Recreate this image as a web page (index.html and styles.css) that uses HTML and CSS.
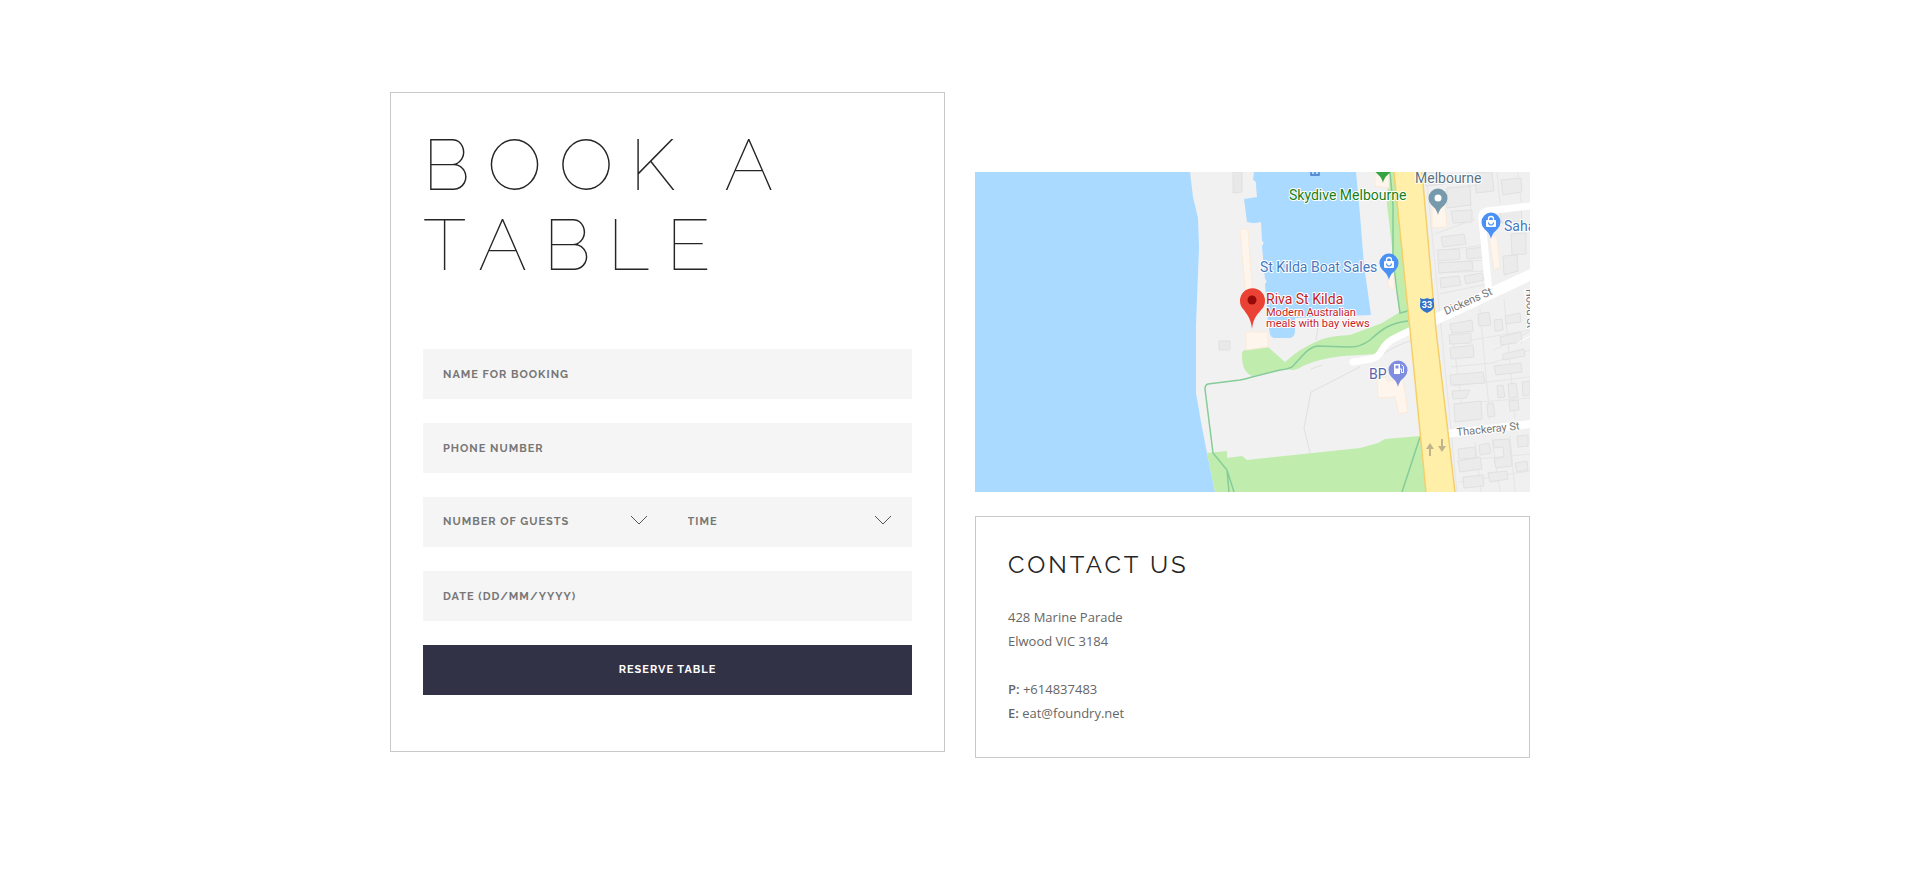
FILE: index.html
```html
<!DOCTYPE html>
<html lang="en">
<head>
<meta charset="utf-8">
<meta name="viewport" content="width=device-width, initial-scale=1">
<title>Book a Table</title>
<link rel="stylesheet" href="styles.css">
</head>
<body>
<main class="container">
  <section class="card booking">
    <h1 class="title">Book a Table</h1>
    <form class="form">
      <input class="field" type="text" placeholder="Name for booking" aria-label="Name for booking">
      <input class="field" type="tel" placeholder="Phone number" aria-label="Phone number">
      <div class="field-row">
        <div class="select">
          <select class="field" aria-label="Number of guests"><option>Number of guests</option></select>
          <svg class="chevron" viewBox="0 0 18 10" aria-hidden="true"><path d="M1 1l8 8 8-8"/></svg>
        </div>
        <div class="select">
          <select class="field" aria-label="Time"><option>Time</option></select>
          <svg class="chevron" viewBox="0 0 18 10" aria-hidden="true"><path d="M1 1l8 8 8-8"/></svg>
        </div>
      </div>
      <input class="field" type="text" placeholder="Date (DD/MM/YYYY)" aria-label="Date (DD/MM/YYYY)">
      <button class="button" type="button">Reserve Table</button>
    </form>
  </section>

  <div class="side">
    <svg class="map" viewBox="0 0 555 320" preserveAspectRatio="xMidYMid slice" role="img" aria-label="Map">
      <defs>
        <path id="pin" d="M0 17C-1 13-2 11-6.500 7A9.500 9.500 0 1 1 6.500 7C2 11 1 13 0 17z"/>
        <g id="bag"><rect x="-5" y="-2" width="10" height="7" rx="1" fill="#fff"/><path d="M-2.500-2v-1a2.500 2.500 0 0 1 5 0v1" fill="none" stroke="#fff" stroke-width="1.300"/><path d="M-2.500 0.500a2.500 2.500 0 0 0 5 0" fill="none" stroke="#4a90f5" stroke-width="1.200"/></g>
      </defs>
      <rect width="555" height="320" fill="#f2f1f2"/>
      <path class="water" d="M0 0H215L218 25L223 46L224 76L221 153V221L226 250L232 281L240 320H0z"/>
      <path class="water" d="M279 0L278 8Q282 9 281 14L282 25L269 27L272 50Q279 52 286 50L287 69Q290 70 287 74L290 107Q293 109 290 112L293 150L295 162Q296 166 300 166H314Q319 166 320 160V146L396 143L389 93L385 43L381 0z"/>
      <path d="M258 0h9v20l-9 1z" fill="#e8e8e9" stroke="#e0e0e1"/>
      <path d="M244 169h11v9h-11z" fill="#e9e9ea" stroke="#e0e0e1"/>
      <path class="green" d="M413 0L412 33L418 83L425 140L407 151L375 163Q354 164 345 168Q325 176 310 190L293 175L270 178Q266 179 267 184Q267 200 277 204L313 197Q319 200 328 194Q350 184 385 183L400 182L412 167L438 154L420 0z"/>
      <path class="green" d="M232 281L252 279V286L267 284L272 288L385 276L403 271L410 267L445 264L451 320H240z"/>
      <path class="lot" d="M385 195L336 220L329 256L335 281M402 186Q420 173 438 168M344 149L341 168M347 193L336 197"/>
      <g class="shop">
        <path d="M265 57h8l5 70h-7z"/><path d="M271 160h22v15l-22 3z"/>
        <path d="M400 0h14v16l-14-2z"/><path d="M412 94l7-1v25l-6-4z"/>
        <path d="M402 206l9-1 1 4 16-2 5 33-9 2-4-17-17 1z"/>
      </g>
      <g class="path">
        <path d="M415 0L418 33V86L422 120L425 141Q430 140 435 138"/>
        <path d="M433 149Q422 150 412 155Q406 158 395 168Q386 175 375 175L342 174Q334 176 328 183L318 194Q315 197 305 198L277 205Q271 207 265 208L233 212Q230 213 230 217L238 281L252 298L259 320M252 298L254 320M445 265L427 320"/>
      </g>
      <path d="M447 0H555V320H480z" fill="#f0f0f1"/>
      <g class="plots">
        <path d="M451 0L482 320M493 0L496 43M522 0L525 32M543 0L546 30M470 20L506 12M500 47L460 62M461 79L509 73M462 91L510 88M463 101L510 99M464 122L513 112M476 152L489 250M505 137L515 248M529 127L540 246M474 172L555 158M476 195L517 191L555 178M519 178L555 159M478 214L555 205M480 232L555 226M482 289L555 282M484 310L555 299M500 270L506 320M517 267L525 320M535 264L540 320"/>
        <path class="house" d="M449 0l18 1 2 11-18 2zM472 16l23-2 1 19-24 3zM476 39l21-1v12l-19 1zM466 65l23-3 2 10-23 3zM463 78l21-1 1 10-22 2zM491 77l18-2 1 10-18 2zM463 91l34-2 1 9-34 3zM465 106l19-2 2 9-20 3zM489 104l18-3 2 7-18 4zM500 1l17-1 2 19-18 2zM526 8l20-2 1 14-19 3zM524 38l22-2 1 13-20 2zM536 62l15-1v21l-14 1zM528 84l14-1 1 16-14 4z"/>
        <path class="house" d="M475 152l22-4 1 11-21 2zM474 163l22-2v10l-21 1zM475 176l23-3 1 12-23 2zM475 203l33-3 2 11-34 2zM477 219l18-1-4 8-13 1zM479 232l27-3 1 18-27 3zM503 142l11-2 2 13-12 1zM519 148l8-1 1 11-8 1zM530 144l15-3 1 9-15 2zM525 165l21-5 1 10-21 3zM528 182l21-5 1 7-22 4zM519 194l27-3 1 9-26 3zM522 214l6-1 2 12-7 1zM533 212l8-1 2 14-9 1zM547 210l8-1v14l-7 1zM512 232l6-1 2 13-7 1zM534 229l9-1 1 10-9 1zM483 277l17-2 1 11-17 1zM483 289l22-4 2 12-22 3zM504 273l10-2 2 10-11 2zM518 268l16-1 3 27-16 2-2-9 10-2-1-10-9 1zM542 264l11-1v11l-10 1zM488 305l20-2 1 11-20 2zM513 301l19-2 1 8-18 3zM540 291l12-2 1 9-11 2z"/>
      </g>
      <g class="shop"><path d="M457 33h13l2 22-15 1z"/><path d="M514 64h8l3 31-6 3z"/></g>
      <g class="road">
        <path d="M378 190L396 187Q403 186 407 178Q411 170 422 165L445 154" stroke-width="7"/>
        <path d="M440 156L470 143L555 103" stroke-width="11"/>
        <path d="M555 34L512 39Q506 40 507 48L514 120" stroke-width="7"/>
        <path d="M470 262L555 252" stroke-width="8"/>
        <path d="M543 171L555 164M549 118L555 150" stroke-width="1"/>
      </g>
      <path d="M419 0L435 158L451 320H480L461 158L447 0z" fill="#ffefa8"/>
      <path d="M419 0L435 158L451 320M447 0L461 158L480 320" fill="none" stroke="#f5cf69" stroke-width="1.500"/>
      <path d="M454 284v-7h-3l4-6 4 6h-3v7zM466 267v7h-3l4 6 4-6h-3v-7z" fill="#bfb389"/>
      <path d="M336 0v3h8V0M340 0v2" fill="none" stroke="#3e75c5" stroke-width="1.300"/>
      <use href="#pin" x="408" y="-6" fill="#34a341"/>
      <use href="#pin" x="463" y="26" fill="#7699ab"/><circle cx="463" cy="26" r="3.500" fill="#fff"/>
      <use href="#pin" x="516" y="50" fill="#4a90f5"/><use href="#bag" x="516" y="50"/>
      <use href="#pin" x="414" y="91" fill="#4a90f5"/><use href="#bag" x="414" y="91"/>
      <use href="#pin" x="423" y="198" fill="#7f8de0"/>
      <path d="M419 192h6v10h-6z" fill="#fff"/><path d="M420.500 193.500h3v3h-3z" fill="#7f8de0"/><path d="M425 197h1.500v3.500h2v-6l-2-2" fill="none" stroke="#fff"/>
      <path d="M277 157C276 147 273 144 269 138A12.500 12.500 0 1 1 286 138C281 144 278 147 277 157z" fill="#ea4335"/><circle cx="277" cy="128" r="4.500" fill="#960a0a"/>
      <path d="M445 126Q449 128 452 126Q455 128 459 126Q458 129 459 132Q460 138 452 141Q444 138 445 132Q446 129 445 126z" fill="#3474c8"/>
      <text class="shield" x="452" y="136">33</text>
      <text class="place green-text" x="314" y="28">Skydive Melbourne</text>
      <text class="place blue-text" x="285" y="100">St Kilda Boat Sales</text>
      <text class="place gray-text" x="440" y="11">Melbourne</text>
      <text class="place blue-text" x="529" y="59">Saha</text>
      <text class="place bp-text" x="394" y="207">BP</text>
      <text class="place red-text" x="291" y="132">Riva St Kilda</text>
      <text class="note red-text" x="291" y="144">Modern Australian</text>
      <text class="note red-text" x="291" y="155">meals with bay views</text>
      <text class="street" transform="translate(471 143) rotate(-24)">Dickens St</text>
      <text class="street" transform="translate(482 264) rotate(-6)">Thackeray St</text>
      <text class="street" transform="translate(551 117) rotate(88)">Hood St</text>
    </svg>

    <section class="card contact">
      <h2 class="subtitle">Contact Us</h2>
      <p class="text">428 Marine Parade<br>Elwood VIC 3184</p>
      <p class="text"><b>P:</b> +614837483<br><b>E:</b> eat@foundry.net</p>
    </section>
  </div>
</main>
</body>
</html>
```
FILE: styles.css
```css
* { box-sizing: border-box; }

body {
  margin: 0;
  background: #fff;
  color: #666;
  font: 13px/24px "Open Sans", sans-serif;
}

.container {
  display: grid;
  grid-template-columns: 1fr 1fr;
  align-items: start;
  gap: 30px;
  max-width: 1170px;
  margin: 0 auto;
  padding: 92px 15px;
}

.card {
  padding: 32px;
  border: 1px solid #c9c9c9;
}

.title,
.subtitle {
  margin: 0;
  color: #252525;
  font-family: Raleway, sans-serif;
  text-transform: uppercase;
}

.title {
  margin-bottom: 64px;
  font-size: 72px;
  font-weight: 100;
  line-height: 80px;
  letter-spacing: 17px;
}

.subtitle {
  margin-bottom: 24px;
  font-size: 24px;
  font-weight: 400;
  line-height: 32px;
  letter-spacing: 3px;
}

.form {
  display: grid;
  gap: 24px;
  margin-bottom: 24px;
}

.field-row {
  display: grid;
  grid-template-columns: 1fr 1fr;
}

.field,
.button {
  width: 100%;
  height: 50px;
  padding: 0 20px;
  border: 0;
  border-radius: 0;
  font: 700 11px/24px Raleway, sans-serif;
  letter-spacing: 1px;
  text-transform: uppercase;
}

.field {
  display: block;
  appearance: none;
  background: #f5f5f5;
  color: #777;
}

.field::placeholder {
  color: #777;
  opacity: 1;
}

.button {
  background: #323247;
  color: #fff;
}

.select { position: relative; }

.chevron {
  position: absolute;
  top: 18px;
  right: 20px;
  width: 18px;
  height: 10px;
  fill: none;
  stroke: #555;
  pointer-events: none;
}

.side {
  display: grid;
  gap: 24px;
  margin-top: 80px;
}

.map {
  display: block;
  width: 100%;
  height: 320px;
  font-family: Roboto, sans-serif;
}

.water { fill: #aadaff; }
.green { fill: #c0ecae; }
.shop { fill: #fef5ec; stroke: #fbead8; }
.path { fill: none; stroke: #85cc98; stroke-width: 1.5; }
.lot { fill: none; stroke: #e0e0e0; }
.plots { fill: none; stroke: #e5e5e6; }
.plots .house { fill: #ebebec; stroke: #e1e1e2; }
.road { fill: none; stroke: #fff; stroke-linecap: round; }

.place,
.note,
.street {
  paint-order: stroke;
  stroke: #fff;
  stroke-width: 2px;
  stroke-linejoin: round;
}

.place { font-size: 14px; }
.note { font-size: 11px; }
.street { fill: #757575; font-size: 11px; }
.shield { fill: #fff; font-size: 9px; font-weight: 700; text-anchor: middle; }
.green-text { fill: #188018; }
.blue-text { fill: #4678c0; }
.gray-text { fill: #5b7283; }
.bp-text { fill: #5864a8; }
.red-text { fill: #c5221f; }

.text { margin: 0; }
.text + .text { margin-top: 24px; }
.text b { font-weight: 600; }
```
